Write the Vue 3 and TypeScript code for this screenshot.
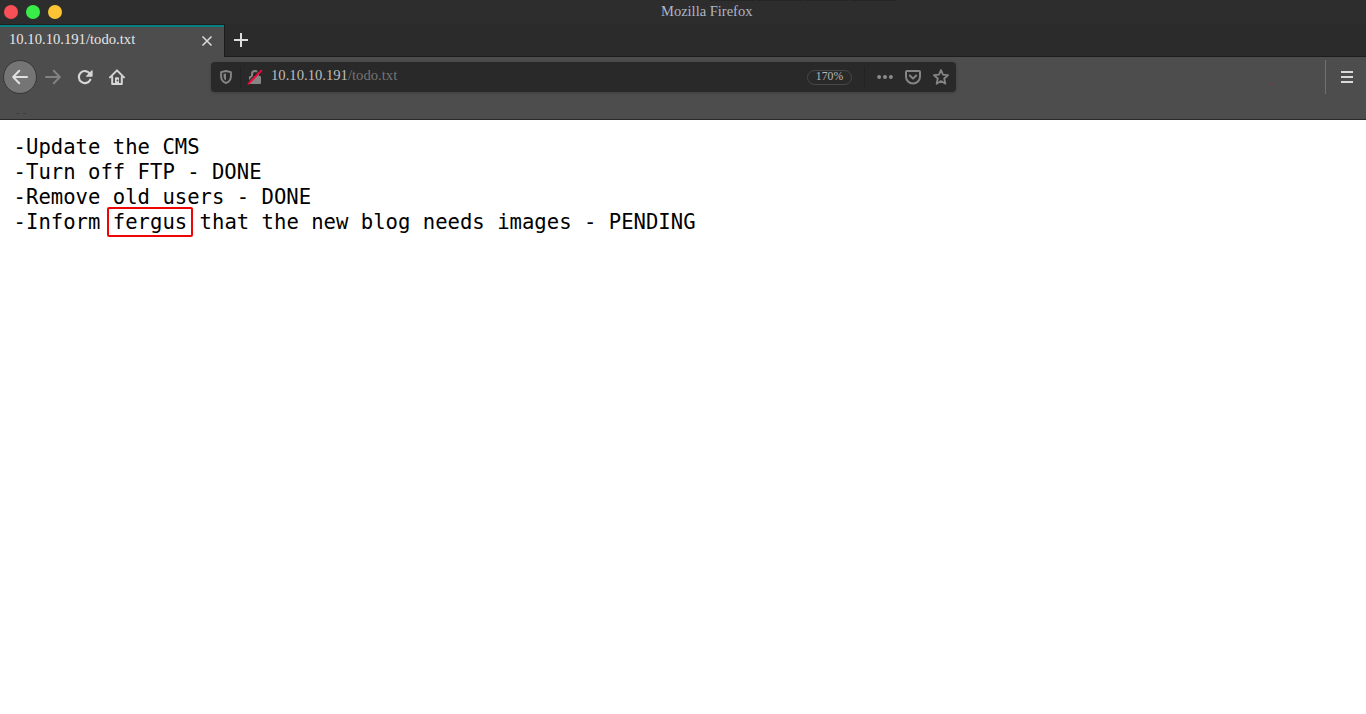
<script setup lang="ts">
const host = '10.10.10.191'
const path = '/todo.txt'
const zoomLevel = '170%'
const lines: string[] = ['-Update the CMS', '-Turn off FTP - DONE', '-Remove old users - DONE']
</script>

<template>
  <div class="window">
    <header class="titlebar">
      <i class="light red"></i>
      <i class="light green"></i>
      <i class="light yellow"></i>
      <span class="title">Mozilla Firefox</span>
      <span class="edge"><i v-for="n in 4" :key="n"></i></span>
    </header>

    <div class="tabs">
      <div class="tab">
        <span class="tab-label">{{ host }}{{ path }}</span>
        <svg class="close" viewBox="0 0 12 12"><path d="M1.500 1.500l9 9M10.500 1.500l-9 9" /></svg>
      </div>
      <div class="strip">
        <svg class="plus" viewBox="0 0 14 14"><path d="M7 0v14M0 7h14" /></svg>
      </div>
    </div>

    <nav class="toolbar">
      <span class="back">
        <svg class="icon line" viewBox="0 0 16 16"><path d="M15 8H1.500M7.200 1.800L1.200 8l6 6.200" /></svg>
      </span>
      <svg class="icon line forward" viewBox="0 0 16 16"><path d="M1 8h13.500M8.800 1.800l6 6.200-6 6.200" /></svg>
      <svg class="icon reload" viewBox="0 0 16 16">
        <path class="arc" d="M12.800 4.600A6 6 0 1 0 13.300 10.700" />
        <path class="head" d="M15.600 1.600v5.400a.8.8 0 0 1-.8.8H9.400q-.8-.2-.3-.8L14.500 1.400q.8-.5 1.100.2z" />
      </svg>
      <svg class="icon home" viewBox="0 0 16 16">
        <path class="roof" d="M1 8.400L8 1.400l7 7" />
        <path class="walls" d="M3.200 8v7h9.600V8" />
        <path class="door" d="M6 15V9.200q0-1 1-1h2q1 0 1 1V15z" />
        <circle class="knob" cx="8.500" cy="11.500" r=".9" />
      </svg>

      <div class="urlbar">
        <svg class="shield" viewBox="0 0 12 14">
          <path class="outline" d="M6 1l4.900 1.200v4.300c0 3-1.600 5.300-4.900 6.500C2.700 11.800 1.100 9.500 1.100 6.500V2.200z" />
          <path class="core" d="M6 3.500v7C4.300 9.500 3.600 8.200 3.600 6.300V4.100z" />
        </svg>
        <i class="divider first"></i>
        <svg class="lock" viewBox="0 0 16 16">
          <path class="shackle" d="M5 8V5a3 3 0 0 1 6 0v3" />
          <rect class="body" x="2" y="7" width="12" height="8" rx="1" />
          <path class="gap" d="M.4 13.800L13.400.1" />
          <path class="slash" d="M1.600 14.700L14.400 1.700" />
        </svg>
        <span class="address">{{ host }}<span>{{ path }}</span></span>
        <span class="zoom">{{ zoomLevel }}</span>
        <i class="divider second"></i>
        <svg class="icon dots" viewBox="0 0 16 16">
          <circle cx="2.100" cy="8" r="2" /><circle cx="8" cy="8" r="2" /><circle cx="13.900" cy="8" r="2" />
        </svg>
        <svg class="icon pocket" viewBox="0 0 16 16">
          <path d="M2 2h12q1 0 1 1v4.500a7 7 0 0 1-14 0V3q0-1 1-1z" />
          <path d="M4.800 6.500L8 9.600l3.200-3.100" />
        </svg>
        <svg class="icon star" viewBox="0 0 16 16">
          <path d="M8 1l2 4.700 5 .5-3.800 3.300 1.200 5.200L8 12.100l-4.400 2.600 1.200-5.200L1 6.200l5-.5z" />
        </svg>
      </div>

      <i class="speck"></i>
      <i class="separator"></i>
      <span class="menu"><i></i><i></i><i></i></span>
    </nav>

    <div class="bookmarks"><i></i><i></i></div>

    <main class="page">
      <div v-for="line in lines" :key="line" class="row">{{ line }}</div>
      <div class="row">-Inform <span class="marked">fergus</span> that the new blog needs images - PENDING</div>
    </main>
  </div>
</template>

<style>
body {
  margin: 0;
  background: #fff;
}
</style>

<style scoped>
.window {
  width: 1366px;
  height: 714px;
  overflow: hidden;
  background: #fff;
  font-family: "Liberation Serif", "Times New Roman", serif;
  font-size: 14.667px;
}
svg {
  display: block;
  flex: none;
  fill: none;
}
.titlebar {
  position: relative;
  box-sizing: border-box;
  display: flex;
  gap: 8px;
  height: 24px;
  padding: 5px 0 0 4px;
  background: #2d2d2d;
}
.light {
  width: 14px;
  height: 14px;
  border-radius: 50%;
}
.red { background: #f94f57; }
.green { background: #39ed49; }
.yellow { background: #fdc534; }
.title {
  margin-left: 591px;
  margin-top: -2px;
  font-size: 14.5px;
  line-height: 17px;
  color: #adb6c6;
}
.edge {
  position: absolute;
  top: 0;
  left: 710px;
  display: flex;
  gap: 2px;
}
.edge i {
  width: 45px;
  height: 1px;
  background: #252525;
}
.tabs {
  display: flex;
  height: 33px;
}
.tab {
  box-sizing: border-box;
  display: flex;
  width: 224px;
  padding-left: 9px;
  border-top: 1px solid #202020;
  box-shadow: inset 0 2px #078080;
  background: #4d4d4d;
}
.tab-label {
  width: 192px;
  padding-top: 6px;
  line-height: 17px;
  color: #e6e6e6;
}
.close {
  width: 12px;
  height: 12px;
  margin-top: 10px;
  stroke: #d8d8d8;
  stroke-width: 1.6;
}
.strip {
  box-sizing: border-box;
  flex: 1;
  padding: 9px 0 0 9px;
  border-left: 1px solid #1d1d1d;
  border-bottom: 1px solid #1d1d1d;
  background: #2b2b2b;
}
.plus {
  width: 14px;
  height: 14px;
  stroke: #dedede;
  stroke-width: 2;
}
.toolbar {
  display: flex;
  align-items: center;
  height: 40px;
  background: #4d4d4d;
}
.icon {
  width: 16px;
  height: 16px;
}
.back {
  box-sizing: border-box;
  display: flex;
  align-items: center;
  justify-content: center;
  width: 34px;
  height: 34px;
  margin-left: 3px;
  border: 1px solid #363636;
  border-radius: 50%;
  background: #757575;
}
.line {
  stroke: #e0e0e0;
  stroke-width: 2;
  stroke-linejoin: round;
  stroke-linecap: round;
}
.forward {
  margin-left: 8px;
  stroke: #828282;
}
.reload {
  margin-left: 16px;
}
.arc {
  stroke: #d6d6d6;
  stroke-width: 2.1;
  stroke-linecap: round;
}
.head {
  fill: #d6d6d6;
}
.home {
  margin-left: 16px;
}
.roof,
.walls {
  stroke: #d6d6d6;
  stroke-width: 2;
  stroke-linecap: round;
  stroke-linejoin: round;
}
.door { fill: #d6d6d6; }
.knob { fill: #4d4d4d; }
.urlbar {
  box-sizing: border-box;
  display: flex;
  align-items: center;
  width: 745px;
  height: 30px;
  margin-left: 86px;
  padding: 0 7px 0 9px;
  border-radius: 4px;
  background: #292929;
  box-shadow: 0 1px 3px rgba(0, 0, 0, 0.2);
}
.shield {
  width: 12px;
  height: 14px;
}
.outline {
  stroke: #858585;
  stroke-width: 1.9;
  stroke-linejoin: round;
}
.core { fill: #858585; }
.divider {
  width: 1px;
  height: 22px;
  background: #232323;
}
.first { margin-left: 8px; }
.lock {
  width: 16px;
  height: 16px;
  margin-left: 6px;
}
.shackle {
  stroke: #858585;
  stroke-width: 2;
}
.body { fill: #858585; }
.gap {
  stroke: #292929;
  stroke-width: 1.2;
}
.slash {
  stroke: #f50539;
  stroke-width: 1.9;
  stroke-linecap: round;
}
.address {
  width: 536px;
  margin: -3px 0 0 8px;
  line-height: 17px;
  color: #bdbdbd;
}
.address span { color: #747474; }
.zoom {
  box-sizing: border-box;
  width: 45px;
  height: 15px;
  border: 1px solid #484848;
  border-radius: 8px;
  font-size: 11.7px;
  line-height: 11px;
  text-align: center;
  color: #b8b8b8;
}
.second { margin-left: 12px; }
.dots {
  margin-left: 12px;
  fill: #8a8a8a;
}
.pocket,
.star {
  margin-left: 12px;
  stroke: #858585;
  stroke-width: 2;
  stroke-linecap: round;
  stroke-linejoin: round;
}
.star { stroke-width: 1.8; }
.speck {
  width: 3px;
  height: 1px;
  margin: 14px 0 0 315px;
  background: #a62b2b;
}
.separator {
  width: 1px;
  height: 34px;
  margin-left: 51px;
  background: #707070;
}
.menu {
  display: flex;
  flex-direction: column;
  gap: 3px;
  margin-left: 15px;
}
.menu i {
  width: 12px;
  height: 2px;
  background: #dadada;
}
.bookmarks {
  box-sizing: border-box;
  display: flex;
  gap: 4px;
  height: 23px;
  padding: 16px 0 0 16px;
  border-bottom: 1px solid #292929;
  background: #4d4d4d;
}
.bookmarks i {
  width: 3px;
  height: 1px;
  background: #3d3d3d;
}
.page {
  padding: 15px 0 0 13.6px;
  font-family: "DejaVu Sans Mono", monospace;
  font-size: 20.6px;
  line-height: 25px;
  color: #000;
}
.row {
  height: 25px;
  white-space: pre;
}
.marked {
  padding: 1px 4px;
  margin: 0 -6px;
  border: 2px solid #f00505;
  border-radius: 2px;
}
</style>
